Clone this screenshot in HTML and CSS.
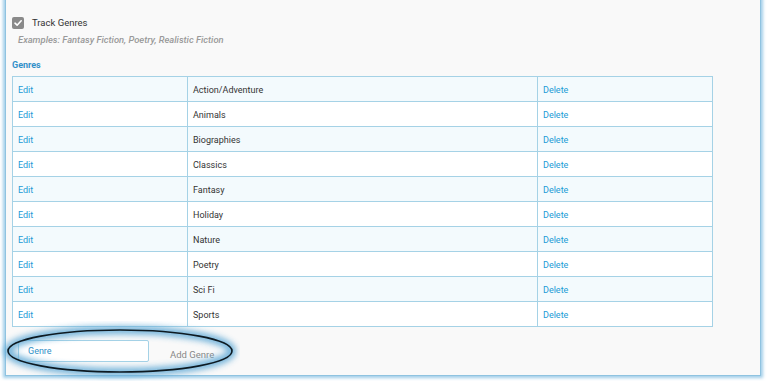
FILE: index.html
```html
<!DOCTYPE html>
<html>
<head>
<meta charset="utf-8">
<link rel="stylesheet" href="styles.css">
</head>
<body>
<div class="panel">
  <label class="track">
    <span class="checkbox"><svg width="12" height="12" viewBox="0 0 12 12"><path d="M3 6.2 L5.1 8.2 L9.2 3.8" fill="none" stroke="#fff" stroke-width="1.6" stroke-linecap="round" stroke-linejoin="round"/></svg></span>
    <span class="track-label">Track Genres</span>
  </label>
  <div class="examples">Examples: Fantasy Fiction, Poetry, Realistic Fiction</div>
  <div class="heading">Genres</div>
  <table class="genres">
    <tr><td class="c1"><a>Edit</a></td><td class="c2">Action/Adventure</td><td class="c3"><a>Delete</a></td></tr>
    <tr><td class="c1"><a>Edit</a></td><td class="c2">Animals</td><td class="c3"><a>Delete</a></td></tr>
    <tr><td class="c1"><a>Edit</a></td><td class="c2">Biographies</td><td class="c3"><a>Delete</a></td></tr>
    <tr><td class="c1"><a>Edit</a></td><td class="c2">Classics</td><td class="c3"><a>Delete</a></td></tr>
    <tr><td class="c1"><a>Edit</a></td><td class="c2">Fantasy</td><td class="c3"><a>Delete</a></td></tr>
    <tr><td class="c1"><a>Edit</a></td><td class="c2">Holiday</td><td class="c3"><a>Delete</a></td></tr>
    <tr><td class="c1"><a>Edit</a></td><td class="c2">Nature</td><td class="c3"><a>Delete</a></td></tr>
    <tr><td class="c1"><a>Edit</a></td><td class="c2">Poetry</td><td class="c3"><a>Delete</a></td></tr>
    <tr><td class="c1"><a>Edit</a></td><td class="c2">Sci Fi</td><td class="c3"><a>Delete</a></td></tr>
    <tr><td class="c1"><a>Edit</a></td><td class="c2">Sports</td><td class="c3"><a>Delete</a></td></tr>
  </table>
  <div class="add-row">
    <div class="input">Genre</div>
    <span class="add">Add Genre</span>
    <svg class="ring" width="240" height="60" viewBox="0 0 240 60">
      <defs><filter id="glow" x="-20%" y="-50%" width="140%" height="200%"><feGaussianBlur stdDeviation="3"/></filter></defs>
      <ellipse cx="120" cy="30" rx="112" ry="21" fill="none" stroke="#5ea9d6" stroke-width="8" filter="url(#glow)" opacity="0.9"/>
      <ellipse cx="120" cy="30" rx="112" ry="21" fill="none" stroke="#0d1a22" stroke-width="1.6"/>
    </svg>
  </div>
</div>
</body>
</html>
```

FILE: styles.css
```css
html, body {
  margin: 0;
  padding: 0;
  background: #ffffff;
}
body {
  width: 769px;
  height: 381px;
  overflow: hidden;
  font-family: Roboto, "Liberation Sans", Arial, sans-serif;
}
.panel {
  box-sizing: border-box;
  margin: -4px 0 0 5px;
  width: 756px;
  height: 380px;
  background: #f9f9f9;
  border: 1px solid #8fc3e0;
  box-shadow: 0 0 3px 2px rgba(130, 190, 225, 0.75);
  padding: 19px 0 0 6px;
}
.track {
  display: flex;
  align-items: center;
  gap: 8px;
  height: 13px;
}
.checkbox {
  width: 12px;
  height: 12px;
  border-radius: 2px;
  background: #8a8a8a;
  display: flex;
}
.track-label {
  font-size: 9.5px;
  color: #333;
}
.examples {
  margin: 5px 0 0 6px;
  font-size: 9.4px;
  font-style: italic;
  font-weight: 500;
  color: #999;
  line-height: 12px;
}
.heading {
  margin-top: 13px;
  font-size: 9px;
  font-weight: 700;
  color: #3391c9;
  line-height: 12px;
}
.genres {
  margin-top: 5px;
  border-collapse: collapse;
  width: 701px;
  font-size: 9px;
}
.genres td {
  box-sizing: border-box;
  border: 1px solid #a5d2e6;
  height: 25px;
  padding: 2px 0 0 5px;
  color: #333;
}
.genres tr:nth-child(odd) td { background: #f3fafd; }
.genres tr:nth-child(even) td { background: #ffffff; }
.genres .c1 { width: 175px; }
.genres .c2 { width: 350px; }
.genres a { color: #1b9ad6; }
.add-row {
  position: relative;
  display: flex;
  align-items: center;
  margin: 13px 0 0 6px;
  height: 22px;
}
.input {
  box-sizing: border-box;
  width: 131px;
  height: 22px;
  border: 1px solid #a5d2e6;
  border-radius: 2px;
  background: #fff;
  font-size: 9px;
  color: #2f8fc8;
  padding: 5px 0 0 9px;
}
.add {
  margin: 6px 0 0 21px;
  font-size: 9.5px;
  color: #888;
}
.ring {
  position: absolute;
  left: -18px;
  top: -19px;
  pointer-events: none;
}
```
